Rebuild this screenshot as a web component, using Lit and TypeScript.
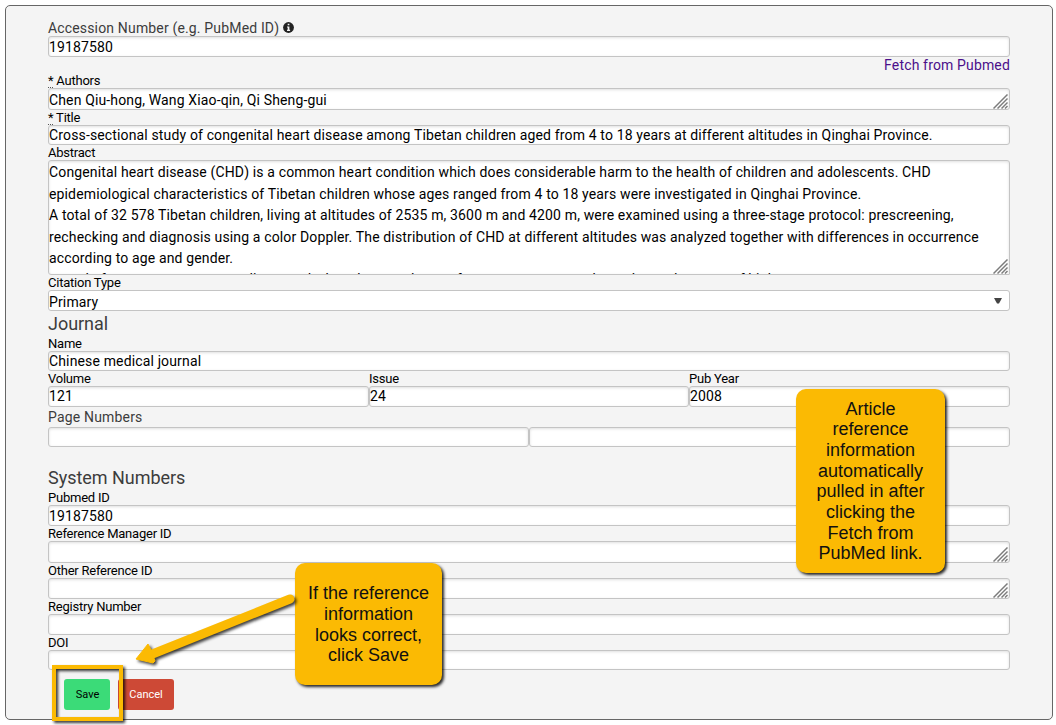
import { LitElement, html, css, svg } from "lit";
import { customElement } from "lit/decorators.js";

const ABSTRACT = [
  "Congenital heart disease (CHD) is a common heart condition which does considerable harm to the health of children and adolescents. CHD",
  "epidemiological characteristics of Tibetan children whose ages ranged from 4 to 18 years were investigated in Qinghai Province.",
  "A total of 32 578 Tibetan children, living at altitudes of 2535 m, 3600 m and 4200 m, were examined using a three-stage protocol: prescreening,",
  "rechecking and diagnosis using a color Doppler. The distribution of CHD at different altitudes was analyzed together with differences in occurrence",
  "according to age and gender.",
  "a total of common cases were diagnosed when the prevalence of occurrence among the males and women of higher ages was not even near",
];

const grip = html`<svg class="grip" width="15" height="15" viewBox="0 0 15 15">
  ${[0, 4, 8, 11.5].map((o) => svg`<path d="M${0.5 + o} 14.5L14.5 ${0.5 + o}" />`)}
</svg>`;

@customElement("app-root")
export class AppRoot extends LitElement {
  static styles = css`
    :host {
      display: block;
      position: relative;
      width: 1056px;
      height: 725px;
      overflow: hidden;
      box-sizing: border-box;
      padding: 5px 3px 5px 5px;
      background: #fff;
      font: 14px/16px Roboto, sans-serif;
      letter-spacing: 0.144px;
      color: #000;
    }
    * { box-sizing: border-box; }
    .panel {
      height: 715px;
      border: 1px solid #666;
      border-radius: 5px;
      background: #f4f4f4;
      padding: 14px 42px 0;
    }
    .lead { height: 16px; line-height: 16px; color: #3c3c3c; display: flex; align-items: center; letter-spacing: 0.16px; }
    .info { margin-left: 4px; margin-top: -1px; }
    .fetch { height: 16px; text-align: right; color: #4b0f8a; letter-spacing: 0.15px; }
    .label { height: 15px; line-height: 15px; font-size: 13px; letter-spacing: -0.23px; white-space: nowrap; }
    .req { display: inline-block; height: 15px; border-bottom: 1px dotted #555; }
    .heading { font-size: 18px; line-height: 25px; height: 25px; color: #3c3c3c; letter-spacing: -0.03px; }
    .pages { height: 20px; line-height: 20px; color: #3c3c3c; letter-spacing: 0.18px; }
    .system { margin-top: 18px; }
    .box {
      position: relative;
      height: 21px;
      line-height: 19px;
      border: 1px solid #c4c4c4;
      border-radius: 3px;
      background: #fff;
      box-shadow: inset 0 1px 3px rgba(0, 0, 0, 0.13);
      white-space: nowrap;
      overflow: hidden;
    }
    .id { line-height: 21px; }
    .h20 { height: 20px; line-height: 18px; }
    .h22 { height: 22px; line-height: 22px; }
    .select { box-shadow: none; line-height: 22px; }
    .abstract { height: 115px; padding-top: 1px; line-height: 21.5px; border-radius: 3px 3px 1px 3px; }
    .line:last-of-type { margin-top: -1px; }
    .grip { position: absolute; right: 1px; bottom: 0; stroke: #7c7c7c; fill: none; stroke-width: 1.5; }
    .caret { position: absolute; right: 7px; top: 7px; fill: #444; }
    .cols { display: grid; }
    .three { grid-template-columns: 321px 320px 321px; }
    .two { grid-template-columns: 481px 481px; }
    .actions { display: flex; gap: 8px; padding: 9px 0 0 16px; }
    .btn { height: 31px; border-radius: 3px; font-size: 11px; line-height: 31px; text-align: center; letter-spacing: 0; }
    .save { width: 46px; padding-left: 1px; background: #3bdb78; }
    .cancel { width: 56px; background: #cd4936; color: #fff; }
    .note {
      position: absolute;
      display: flex;
      align-items: center;
      text-align: center;
      justify-content: center;
      background: #fbba03;
      border-radius: 10px;
      box-shadow: 2px 2px 3px rgba(0, 0, 0, 0.85);
      font: 18px/20.67px "Liberation Sans", sans-serif;
      letter-spacing: 0;
      color: #111;
      white-space: pre-line;
    }
    .n1 { left: 796px; top: 389px; width: 149px; height: 184px; padding-top: 0.8px; }
    .n2 { left: 295px; top: 563px; width: 147px; height: 122px; padding-top: 1px; }
    .arrow { position: absolute; left: 120px; top: 580px; filter: drop-shadow(2px 2px 1.5px rgba(0, 0, 0, 0.75)); }
    .frame {
      position: absolute;
      left: 52px;
      top: 665px;
      width: 71px;
      height: 56px;
      border: 4px solid #fbba03;
      filter: drop-shadow(2px 2px 1.5px rgba(0, 0, 0, 0.8));
    }
  `;

  render() {
    return html`
      <div class="panel">
        <div class="lead">
          <span>Accession Number (e.g. PubMed ID)</span>
          <svg class="info" width="11" height="11" viewBox="0 0 11 11">
            <circle cx="5.5" cy="5.5" r="5.4" fill="#222" />
            <path d="M4.7 1.8h1.7v1.5H4.7zM4 4.4h2.4v3.4h.7v1.1H4V7.8h.7V5.5H4z" fill="#f4f4f4" />
          </svg>
        </div>
        <div class="box id">19187580</div>
        <div class="fetch">Fetch from Pubmed</div>
        <div class="label"><span class="req">*</span> Authors</div>
        <div class="box h22">Chen Qiu-hong, Wang Xiao-qin, Qi Sheng-gui${grip}</div>
        <div class="label"><span class="req">*</span> Title</div>
        <div class="box h20">Cross-sectional study of congenital heart disease among Tibetan children aged from 4 to 18 years at different altitudes in Qinghai Province.</div>
        <div class="label">Abstract</div>
        <div class="box abstract">${ABSTRACT.map((l) => html`<div class="line">${l}</div>`)}${grip}</div>
        <div class="label">Citation Type</div>
        <div class="box select">Primary<svg class="caret" width="8" height="6" viewBox="0 0 8 6"><path d="M0 0h8L5 5.5H3z" /></svg></div>
        <div class="heading">Journal</div>
        <div class="label">Name</div>
        <div class="box h20">Chinese medical journal</div>
        <div class="cols three">
          <div class="label">Volume</div>
          <div class="label">Issue</div>
          <div class="label">Pub Year</div>
          <div class="box">121</div>
          <div class="box">24</div>
          <div class="box">2008</div>
        </div>
        <div class="pages">Page Numbers</div>
        <div class="cols two"><div class="box h20"></div><div class="box h20"></div></div>
        <div class="heading system">System Numbers</div>
        <div class="label">Pubmed ID</div>
        <div class="box id">19187580</div>
        <div class="label">Reference Manager ID</div>
        <div class="box h22">${grip}</div>
        <div class="label">Other Reference ID</div>
        <div class="box">${grip}</div>
        <div class="label">Registry Number</div>
        <div class="box"></div>
        <div class="label">DOI</div>
        <div class="box h20"></div>
        <div class="actions">
          <div class="btn save">Save</div>
          <div class="btn cancel">Cancel</div>
        </div>
      </div>
      <div class="note n1">Article
reference
information
automatically
pulled in after
clicking the
Fetch from
PubMed link.</div>
      <div class="note n2">If the reference
information
looks correct,
click Save</div>
      <svg class="arrow" width="180" height="90" viewBox="120 580 180 90">
        <path d="M290 599L150 655" stroke="#fbba03" stroke-width="9" stroke-linecap="round" />
        <path d="M136 659L148 644L151 650L155 661L153 663Z" fill="#fbba03" stroke="#fbba03" stroke-linejoin="round" />
      </svg>
      <div class="frame"></div>
    `;
  }
}
